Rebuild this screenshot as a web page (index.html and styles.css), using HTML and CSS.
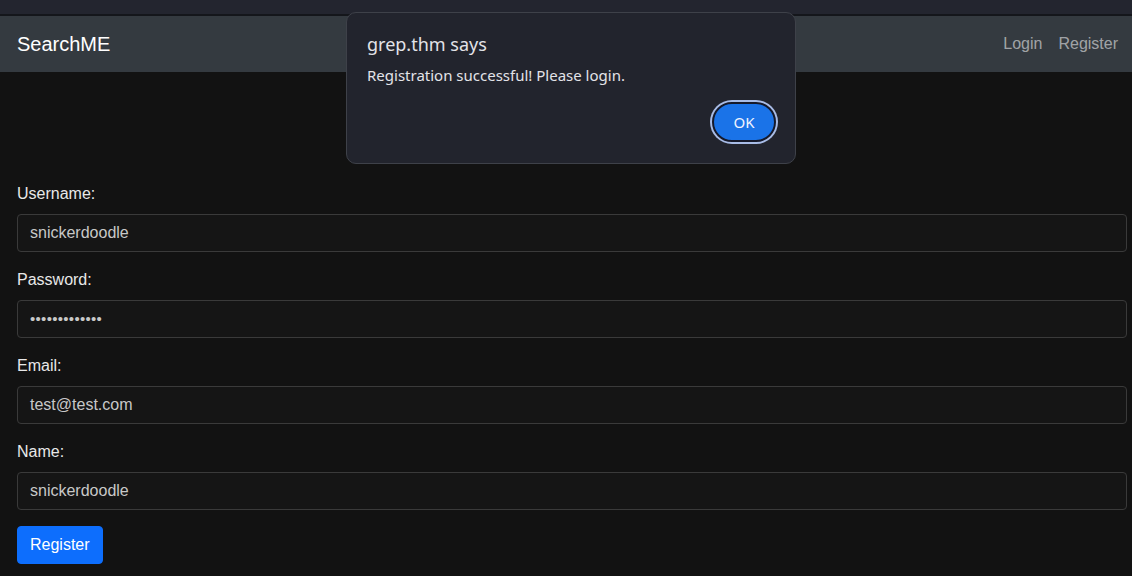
FILE: index.html
```html
<!DOCTYPE html>
<html>
<head>
<meta charset="utf-8">
<link rel="stylesheet" href="styles.css">
</head>
<body>
<div class="topstrip"></div>
<nav class="navbar">
  <a class="brand">SearchME</a>
  <div class="navlinks">
    <a class="navlink">Login</a>
    <a class="navlink">Register</a>
  </div>
</nav>
<main class="content">
  <form class="form">
    <div class="group">
      <label class="label">Username:</label>
      <div class="input">snickerdoodle</div>
    </div>
    <div class="group">
      <label class="label">Password:</label>
      <div class="input dots">•••••••••••••</div>
    </div>
    <div class="group">
      <label class="label">Email:</label>
      <div class="input">test@test.com</div>
    </div>
    <div class="group">
      <label class="label">Name:</label>
      <div class="input">snickerdoodle</div>
    </div>
    <button type="button" class="btn">Register</button>
  </form>
</main>
<div class="dialog">
  <div class="dlg-title">grep.thm says</div>
  <div class="dlg-msg">Registration successful! Please login.</div>
  <div class="dlg-actions"><button type="button" class="ok">OK</button></div>
</div>
</body>
</html>
```
FILE: styles.css
```css
* { box-sizing: border-box; }
html, body { margin: 0; padding: 0; }
body {
  background: #121212;
  font-family: "Liberation Sans", Arial, sans-serif;
  color: #dee2e6;
  width: 1132px;
  height: 576px;
  overflow: hidden;
  position: relative;
}
.topstrip {
  height: 16px;
  background: #23252f;
  border-bottom: 2px solid #14161b;
}
.navbar {
  height: 56px;
  background: #343a40;
  display: flex;
  align-items: center;
  justify-content: space-between;
  padding: 0 14px 0 17px;
}
.brand { font-size: 20px; color: #fff; }
.navlinks { display: flex; gap: 16px; }
.navlink { font-size: 16px; color: rgba(255,255,255,.55); }
.content { padding: 110px 5px 0 17px; }
.form { display: flex; flex-direction: column; }
.group { display: flex; flex-direction: column; gap: 8px; margin-bottom: 16px; }
.label { font-size: 16px; line-height: 24px; color: #e8e8e8; }
.input {
  height: 38px;
  border: 1px solid #3a3a3a;
  border-radius: 4px;
  background: #151515;
  padding: 0 12px;
  font-size: 16px;
  line-height: 36px;
  color: #c8c8c8;
}
.dots { font-size: 15px; letter-spacing: 0.3px; color: #c8c8c8; }
.btn {
  align-self: flex-start;
  height: 38px;
  padding: 0 12px;
  background: #0d6efd;
  border: 1px solid #0d6efd;
  border-radius: 4px;
  color: #fff;
  font-family: "Liberation Sans", Arial, sans-serif;
  font-size: 16px;
}
.dialog {
  position: absolute;
  left: 346px;
  top: 12px;
  width: 450px;
  height: 152px;
  background: #22242d;
  border: 1px solid #3e4149;
  border-radius: 10px;
  padding: 18px 18px 0 20px;
  font-family: "Noto Sans", "Open Sans", sans-serif;
  color: #e3e3e8;
}
.dlg-title { font-size: 18px; line-height: 26px; }
.dlg-msg { font-size: 15px; line-height: 22px; margin-top: 7px; }
.dlg-actions { display: flex; justify-content: flex-end; margin-top: 16px; }
.ok {
  width: 64px;
  height: 40px;
  border-radius: 20px;
  background: #1a73e8;
  border: 2px solid #15192a;
  box-shadow: 0 0 0 2px #a8bce6;
  color: #f0f4ff;
  font-family: "Noto Sans", "Open Sans", sans-serif;
  font-size: 15px;
  margin-right: 1px;
}
```
